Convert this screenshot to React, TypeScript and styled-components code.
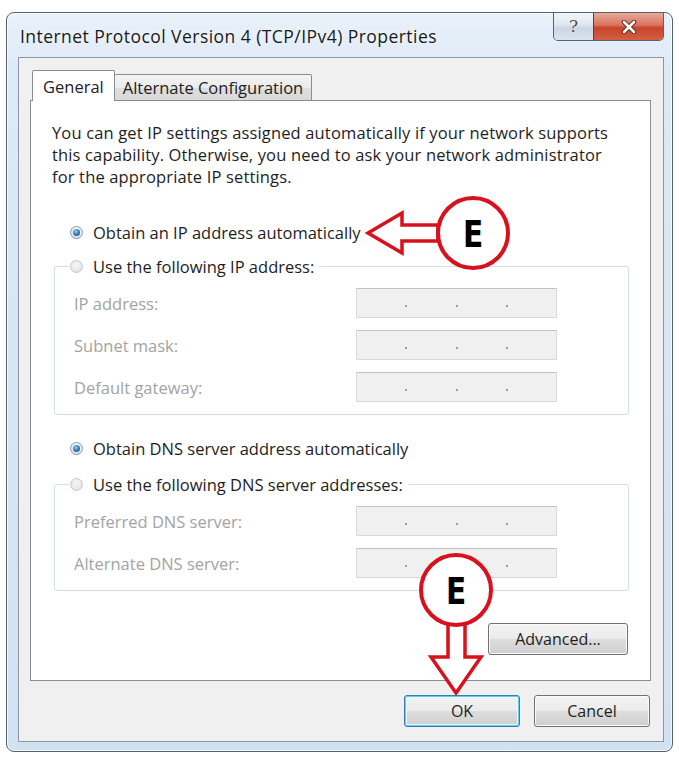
import styled, { createGlobalStyle } from 'styled-components';

const GlobalStyle = createGlobalStyle`
  html, body {
    margin: 0;
    padding: 0;
    background: #ffffff;
  }
  body {
    font-family: "Open Sans", "Noto Sans", sans-serif;
    color: #1e1e1e;
  }
`;

const Page = styled.div`
  position: relative;
  width: 679px;
  height: 759px;
  box-sizing: border-box;
  padding: 12px 6px 7px 6px;
`;

const Window = styled.div`
  height: 100%;
  box-sizing: border-box;
  border: 1px solid #56616e;
  border-radius: 8px;
  background: linear-gradient(180deg, #eaf2fb 0%, #dce9f6 8%, #d2e2f2 100%);
  box-shadow: inset 0 0 0 1px rgba(255, 255, 255, 0.75);
  display: flex;
  flex-direction: column;
  padding: 0 8px 9px 11px;
`;

const TitleBar = styled.div`
  height: 44px;
  flex: none;
  display: flex;
  justify-content: space-between;
  align-items: flex-start;
`;

const Title = styled.div`
  margin: 12px 0 0 2px;
  font-size: 17.5px;
  letter-spacing: 0.45px;
  line-height: 22px;
  color: #1a1a1a;
  text-shadow: 0 0 6px rgba(255, 255, 255, 0.9);
`;

const CaptionGroup = styled.div`
  display: flex;
  border: 1px solid #59636f;
  border-top: none;
  border-radius: 0 0 5px 5px;
  overflow: hidden;
  height: 27px;
`;

const CaptionButton = styled.div<{ $close?: boolean }>`
  width: ${p => (p.$close ? '69px' : '39px')};
  display: flex;
  align-items: center;
  justify-content: center;
  border-left: ${p => (p.$close ? '1px solid #6b3a33' : 'none')};
  background: ${p =>
    p.$close
      ? 'linear-gradient(180deg, #e9a99a 0%, #d8735e 45%, #c7442b 55%, #d4603f 100%)'
      : 'linear-gradient(180deg, #f3f6fa 0%, #dde6ef 45%, #c9d6e3 55%, #d8e3ee 100%)'};
`;

const HelpGlyph = styled.span`
  font-family: "DejaVu Serif", serif;
  font-size: 17px;
  line-height: 1;
  color: #3f4d5e;
  text-shadow: 0 0 2px #ffffff;
`;

const Client = styled.div`
  flex: 1;
  display: flex;
  flex-direction: column;
  background: #f0f0f0;
  border: 1px solid #8b97a3;
  padding: 12px 12px 14px 11px;
`;

const TabRow = styled.div`
  display: flex;
  align-items: flex-end;
  height: 31px;
  margin-bottom: -1px;
  position: relative;
  z-index: 1;
`;

const Tab = styled.div<{ $active?: boolean }>`
  box-sizing: border-box;
  height: ${p => (p.$active ? '31px' : '27px')};
  margin-left: ${p => (p.$active ? '2px' : '0')};
  padding: ${p => (p.$active ? '0 10px' : '0 8px')};
  display: flex;
  align-items: center;
  font-size: 16.5px;
  color: #222;
  border: 1px solid #898c95;
  border-bottom: ${p => (p.$active ? 'none' : '1px solid #898c95')};
  border-left: ${p => (p.$active ? '1px solid #898c95' : 'none')};
  border-radius: 2px 2px 0 0;
  background: ${p =>
    p.$active ? '#ffffff' : 'linear-gradient(180deg, #f4f4f4 0%, #ebebeb 50%, #dedede 51%, #d9d9d9 100%)'};
`;

const Panel = styled.div`
  height: 581px;
  flex: none;
  box-sizing: border-box;
  background: #ffffff;
  border: 1px solid #898c95;
  padding: 21px 21px 0 21px;
  display: flex;
  flex-direction: column;
`;

const Intro = styled.p`
  margin: 0;
  font-size: 16.5px;
  letter-spacing: 0.15px;
  line-height: 22px;
  color: #1e1e1e;
  white-space: nowrap;
`;

const RadioRow = styled.label<{ $gap?: number }>`
  display: flex;
  align-items: center;
  height: 22px;
  margin: ${p => p.$gap ?? 0}px 0 0 18px;
  font-size: 16.5px;
  color: #1e1e1e;
`;

const Radio = styled.span<{ $checked?: boolean }>`
  position: relative;
  flex: none;
  width: 13px;
  height: 13px;
  box-sizing: border-box;
  border-radius: 50%;
  margin-right: 10px;
  border: 1px solid ${p => (p.$checked ? '#8d9aa6' : '#c4c8cc')};
  background: ${p =>
    p.$checked
      ? 'radial-gradient(circle at 50% 35%, #ffffff 0%, #dfe5ea 70%, #c5ccd3 100%)'
      : 'radial-gradient(circle at 50% 35%, #f6f6f6 0%, #e4e6e8 70%, #d4d7da 100%)'};
  &::after {
    content: '';
    display: ${p => (p.$checked ? 'block' : 'none')};
    position: absolute;
    left: 2px;
    top: 2px;
    width: 7px;
    height: 7px;
    border-radius: 50%;
    background: radial-gradient(circle at 40% 35%, #8ed0f4 0%, #2c78b4 55%, #1a4f80 100%);
  }
`;

const Group = styled.fieldset<{ $gap: number }>`
  margin: ${p => p.$gap}px 0 0 2px;
  padding: 0;
  min-width: 0;
  border: 1px solid #d7dde2;
  border-radius: 3px;
`;

const Legend = styled.legend`
  margin-left: 14px;
  padding: 0 5px 0 1px;
  height: 22px;
  display: flex;
  align-items: center;
  font-size: 16.5px;
  color: #1e1e1e;
`;

const FieldGrid = styled.div`
  display: grid;
  grid-template-columns: 1fr 201px;
  grid-auto-rows: 30px;
  row-gap: 12px;
  align-items: center;
  padding: 11px 71px 12px 19px;
`;

const FieldLabel = styled.span`
  font-size: 16.5px;
  color: #a3a3a3;
`;

const IpBox = styled.div`
  height: 30px;
  box-sizing: border-box;
  display: flex;
  align-items: center;
  background: #f0f0f0;
  border: 1px solid #d9d9d9;
  border-top-color: #c2c2c2;
`;

const Octet = styled.span`
  flex: 1;
`;

const Dot = styled.span`
  width: 2px;
  height: 2px;
  margin-top: 6px;
  background: #9b9b9b;
`;

const Button = styled.button<{ $default?: boolean; $w: number }>`
  width: ${p => p.$w}px;
  height: 32px;
  box-sizing: border-box;
  padding: 0;
  font-family: "Open Sans", "Noto Sans", sans-serif;
  font-size: 16px;
  color: #1e1e1e;
  border-radius: 3px;
  border: 1px solid ${p => (p.$default ? '#3d7bad' : '#707070')};
  box-shadow: ${p =>
    p.$default ? 'inset 0 0 0 1px #5fd0f0, inset 0 0 0 2px #e8f6fc' : 'inset 0 0 0 1px #fbfbfb'};
  background: linear-gradient(180deg, #f3f3f3 0%, #ebebeb 49%, #dddddd 50%, #cfcfcf 100%);
`;

const AdvancedButton = styled(Button)`
  align-self: flex-end;
  margin: 32px 1px 0 0;
`;

const Footer = styled.div`
  display: flex;
  justify-content: flex-end;
  gap: 14px;
  margin: 14px 1px 0 0;
`;

const Overlay = styled.svg`
  position: absolute;
  left: 0;
  top: 0;
  pointer-events: none;
`;

const Marker = styled.text`
  font-family: "DejaVu Sans", sans-serif;
  font-weight: 700;
  font-size: 38px;
  fill: #000;
`;

type Field = { label: string };

const ipFields: Field[] = [{ label: 'IP address:' }, { label: 'Subnet mask:' }, { label: 'Default gateway:' }];
const dnsFields: Field[] = [{ label: 'Preferred DNS server:' }, { label: 'Alternate DNS server:' }];

const IpInput = () => (
  <IpBox>
    <Octet />
    <Dot />
    <Octet />
    <Dot />
    <Octet />
    <Dot />
    <Octet />
  </IpBox>
);

const Fields = ({ items }: { items: Field[] }) => (
  <FieldGrid>
    {items.map(f => [
      <FieldLabel key={f.label}>{f.label}</FieldLabel>,
      <IpInput key={f.label + '-box'} />,
    ])}
  </FieldGrid>
);

const Annotations = () => (
  <Overlay width="679" height="759" viewBox="0 0 679 759">
    <polygon
      points="368,233 402,213 402,225 438,225 438,241 402,241 402,253"
      fill="#ffffff"
      stroke="#d8121c"
      strokeWidth="3.5"
      strokeLinejoin="miter"
    />
    <circle cx="473" cy="233" r="35" fill="#ffffff" stroke="#d8121c" strokeWidth="4" />
    <Marker transform="translate(473 247) scale(0.78 1)" textAnchor="middle">
      E
    </Marker>

    <polygon
      points="448,624 465,624 465,657 481,657 456,693 431,657 448,657"
      fill="#ffffff"
      stroke="#d8121c"
      strokeWidth="3.5"
    />
    <circle cx="456" cy="590" r="35" fill="#ffffff" stroke="#d8121c" strokeWidth="4" />
    <Marker transform="translate(456 604) scale(0.78 1)" textAnchor="middle">
      E
    </Marker>
  </Overlay>
);

export default function App() {
  return (
    <>
      <GlobalStyle />
      <Page>
        <Window>
          <TitleBar>
            <Title>Internet Protocol Version 4 (TCP/IPv4) Properties</Title>
            <CaptionGroup>
              <CaptionButton>
                <HelpGlyph>?</HelpGlyph>
              </CaptionButton>
              <CaptionButton $close>
                <svg width="18" height="14" viewBox="0 0 18 14">
                  <path d="M4 2 L14 12 M14 2 L4 12" stroke="#5b2219" strokeWidth="4.5" strokeLinecap="round" />
                  <path d="M4 2 L14 12 M14 2 L4 12" stroke="#ffffff" strokeWidth="2.6" strokeLinecap="round" />
                </svg>
              </CaptionButton>
            </CaptionGroup>
          </TitleBar>
          <Client>
            <TabRow>
              <Tab $active>General</Tab>
              <Tab>Alternate Configuration</Tab>
            </TabRow>
            <Panel>
              <Intro>
                You can get IP settings assigned automatically if your network supports
                <br />
                this capability. Otherwise, you need to ask your network administrator
                <br />
                for the appropriate IP settings.
              </Intro>

              <RadioRow $gap={33}>
                <Radio $checked />
                Obtain an IP address automatically
              </RadioRow>
              <Group $gap={12}>
                <Legend>
                  <Radio />
                  Use the following IP address:
                </Legend>
                <Fields items={ipFields} />
              </Group>

              <RadioRow $gap={22}>
                <Radio $checked />
                Obtain DNS server address automatically
              </RadioRow>
              <Group $gap={14}>
                <Legend>
                  <Radio />
                  Use the following DNS server addresses:
                </Legend>
                <Fields items={dnsFields} />
              </Group>

              <AdvancedButton $w={140}>Advanced...</AdvancedButton>
            </Panel>
            <Footer>
              <Button $default $w={116}>
                OK
              </Button>
              <Button $w={116}>Cancel</Button>
            </Footer>
          </Client>
        </Window>
        <Annotations />
      </Page>
    </>
  );
}
